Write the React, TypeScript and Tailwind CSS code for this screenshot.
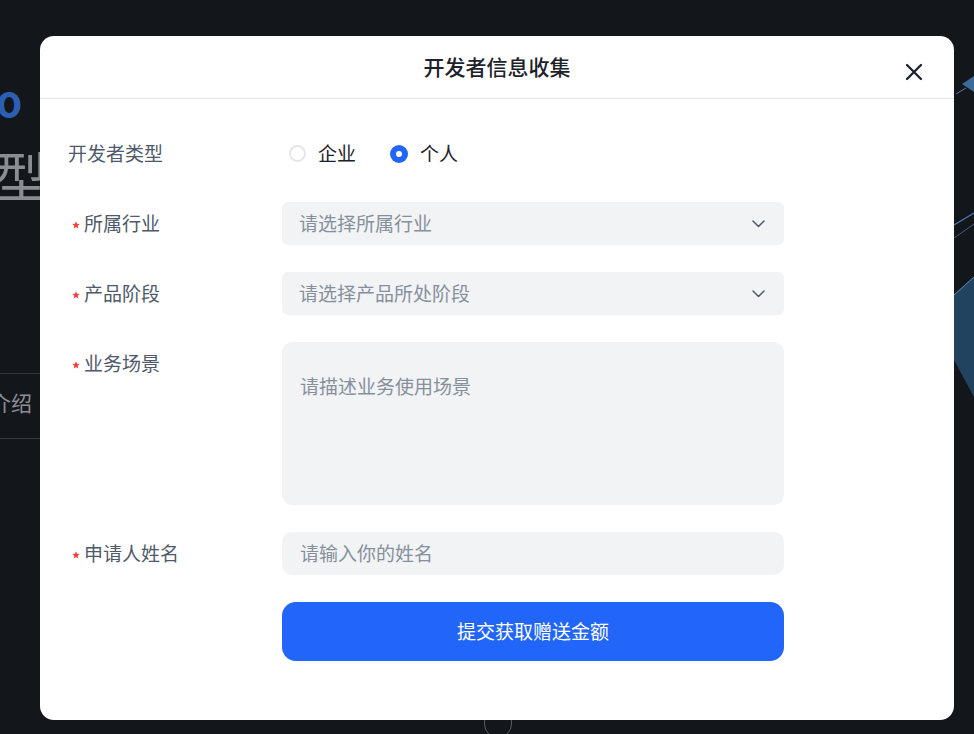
import type { ReactNode } from "react";

const font = { fontFamily: '"Noto Sans CJK SC", "Noto Sans", sans-serif' };

function Chevron() {
  return (
    <svg width="13" height="8" viewBox="0 0 13 8" fill="none">
      <path d="M1 1l5.5 5.5L12 1" stroke="#4e5969" strokeWidth="1.5" strokeLinecap="round" strokeLinejoin="round" />
    </svg>
  );
}

function Star() {
  return (
    <svg className="ml-[4px] mr-[4px] mt-[2px]" width="8" height="8" viewBox="0 0 10 10">
      <path d="M5 0.4l1.3 3.1 3.3.3-2.5 2.2.8 3.3L5 7.6 2.1 9.3l.8-3.3L.4 3.8l3.3-.3z" fill="#f53f3f" />
    </svg>
  );
}

function Label({ required, children }: { required?: boolean; children: ReactNode }) {
  return (
    <div className="flex h-[43px] w-[214px] shrink-0 items-center text-[19px] text-[#4e5969]">
      {required && <Star />}
      {children}
    </div>
  );
}

function Row({ label, required, children }: { label: string; required?: boolean; children: ReactNode }) {
  return (
    <div className="flex items-start">
      <Label required={required}>{label}</Label>
      <div className="w-[502px]">{children}</div>
    </div>
  );
}

function SelectBox({ placeholder }: { placeholder: string }) {
  return (
    <div className="flex h-[43px] items-center justify-between rounded-[6px] bg-[#f2f3f5] pl-[17px] pr-[19px] text-[19px] text-[#86909c]">
      <span>{placeholder}</span>
      <Chevron />
    </div>
  );
}

export default function App() {
  return (
    <div className="relative h-[734px] w-[974px] overflow-hidden bg-[#13161b]" style={font}>
      {/* page behind the dialog */}
      <div className="absolute left-[-4px] top-[78px] text-[42px] font-bold leading-none text-[#2b5fb4]">o</div>
      <div className="absolute left-[-6px] top-[148px] text-[54px] leading-none text-[#8a8d92]">型</div>
      <div className="absolute left-0 top-[373px] h-px w-[40px] bg-[#34373c]" />
      <div className="absolute left-[-10px] top-[392px] text-[21px] leading-none text-[#8d9095]">介绍</div>
      <div className="absolute left-0 top-[438px] h-px w-[40px] bg-[#34373c]" />
      <div className="absolute left-[484px] top-[708px] h-[30px] w-[28px] rounded-full border border-[#5a5d62]" />
      <svg className="absolute left-[954px] top-[60px]" width="20" height="360" viewBox="0 0 20 360" fill="none">
        <path d="M8 24l12-8v16z" fill="#3d6a99" />
        <path d="M2 34l10-6" stroke="#4a78a8" strokeWidth="1" />
        <path d="M0 165l20-12" stroke="#4a78a8" strokeWidth="1.2" />
        <path d="M0 178l20-14" stroke="#3b5f86" strokeWidth="1" />
        <path d="M0 235l20-18v120L0 300z" fill="#22435f" />
        <path d="M0 235l20-18" stroke="#5f8fc0" strokeWidth="1" />
      </svg>

      {/* dialog */}
      <div className="absolute left-[40px] top-[36px] h-[684px] w-[914px] rounded-[14px] bg-white">
        <div className="relative flex h-[63px] items-center justify-center border-b border-[#e5e6eb]">
          <h2 className="text-[21px] font-medium text-[#1d2129]">开发者信息收集</h2>
          <button type="button" className="absolute right-[31px] top-[27px]" aria-label="关闭">
            <svg width="18" height="18" viewBox="0 0 18 18" fill="none">
              <path d="M2 2l14 14M16 2L2 16" stroke="#1d2129" strokeWidth="2.3" strokeLinecap="round" />
            </svg>
          </button>
        </div>

        <div className="flex flex-col gap-[27px] pl-[28px] pt-[33px]">
          <Row label="开发者类型">
            <div className="flex h-[43px] items-center pl-[7px] text-[19px] text-[#1d2129]">
              <span className="h-[17px] w-[17px] rounded-full border-2 border-[#e5e6eb]" />
              <span className="ml-[12px]">企业</span>
              <span className="ml-[34px] flex h-[18px] w-[18px] items-center justify-center rounded-full bg-[#2266f9]">
                <span className="h-[6px] w-[6px] rounded-full bg-white" />
              </span>
              <span className="ml-[12px]">个人</span>
            </div>
          </Row>
          <Row label="所属行业" required>
            <SelectBox placeholder="请选择所属行业" />
          </Row>
          <Row label="产品阶段" required>
            <SelectBox placeholder="请选择产品所处阶段" />
          </Row>
          <Row label="业务场景" required>
            <div className="h-[163px] rounded-[10px] bg-[#f2f3f5] pl-[18px] pt-[31px] text-[19px] leading-[26px] text-[#86909c]">
              请描述业务使用场景
            </div>
          </Row>
          <Row label="申请人姓名" required>
            <div className="flex h-[43px] items-center rounded-[10px] bg-[#f2f3f5] pl-[18px] text-[19px] text-[#86909c]">
              请输入你的姓名
            </div>
          </Row>
          <div className="flex">
            <div className="w-[214px] shrink-0" />
            <button
              type="button"
              className="h-[59px] w-[502px] rounded-[14px] bg-[#2266f9] text-[19px] text-white"
            >
              提交获取赠送金额
            </button>
          </div>
        </div>
      </div>
    </div>
  );
}
